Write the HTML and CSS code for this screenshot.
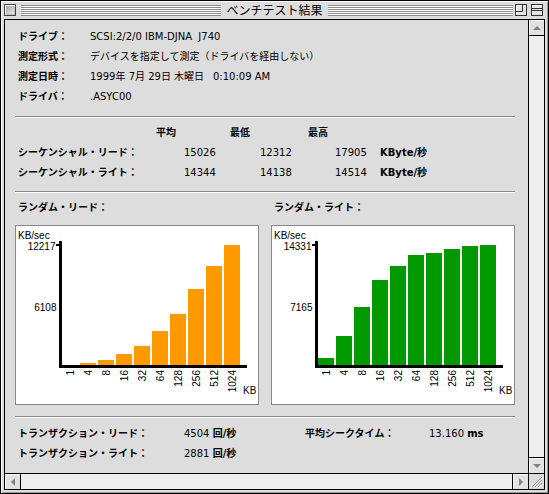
FILE: index.html
```html
<!DOCTYPE html>
<html lang="ja">
<head>
<meta charset="utf-8">
<title>ベンチテスト結果</title>
<link rel="stylesheet" href="styles.css">
</head>
<body>
<div class="window">
  <div class="titlebar">
    <div class="tb-left"><span class="closebox"></span><span class="stripes"></span></div>
    <div class="title">ベンチテスト結果</div>
    <div class="tb-right">
      <span class="stripes"></span>
      <svg class="wbox zoombox" width="12" height="12" viewBox="0 0 12 12">
        <rect x="0.5" y="0.5" width="11" height="11" fill="#e4e4e4" stroke="#333"/>
        <path d="M1.5 10.5V1.5H10.5" fill="none" stroke="#fff"/>
        <path d="M0.5 7.5H7.5V0.5" fill="none" stroke="#333"/>
      </svg>
      <svg class="wbox collapsebox" width="12" height="12" viewBox="0 0 12 12">
        <rect x="0.5" y="0.5" width="11" height="11" fill="#e4e4e4" stroke="#333"/>
        <path d="M1.5 10.5V1.5H10.5" fill="none" stroke="#fff"/>
        <path d="M0.5 4.5H11.5M0.5 6.5H11.5" fill="none" stroke="#333"/>
      </svg>
    </div>
  </div>
  <div class="frame">
    <div class="main">
      <div class="info">
        <div class="lbl">ドライブ：</div><div>SCSI:2/2/0 IBM-DJNA&nbsp; J740</div>
        <div class="lbl">測定形式：</div><div>デバイスを指定して測定（ドライバを経由しない）</div>
        <div class="lbl">測定日時：</div><div><span class="date">1999年 7月 29日 木曜日</span><span>0:10:09 AM</span></div>
        <div class="lbl">ドライバ：</div><div>.ASYC00</div>
      </div>
      <hr class="sep sep1">
      <div class="seq-head"><span></span><span>平均</span><span>最低</span><span>最高</span></div>
      <div class="seq-row"><span class="lbl">シーケンシャル・リード：</span><span>15026</span><span>12312</span><span>17905</span><span class="lbl">KByte/秒</span></div>
      <div class="seq-row"><span class="lbl">シーケンシャル・ライト：</span><span>14344</span><span>14138</span><span>14514</span><span class="lbl">KByte/秒</span></div>
      <hr class="sep sep2">
      <div class="rand-labels"><span>ランダム・リード：</span><span>ランダム・ライト：</span></div>
      <div class="charts">
        <div class="chart">
          <svg width="242" height="178" viewBox="0 0 242 178">
            <text x="2" y="13">KB/sec</text>
            <text x="39.5" y="23.5" text-anchor="end">12217</text>
            <text x="40.5" y="84.5" text-anchor="end">6108</text>
            <g fill="#ff9900">
              <rect x="64" y="137" width="16" height="2"/>
              <rect x="82" y="134" width="16" height="5"/>
              <rect x="100" y="128" width="16" height="11"/>
              <rect x="118" y="120" width="16" height="19"/>
              <rect x="136" y="105" width="16" height="34"/>
              <rect x="154" y="88" width="16" height="51"/>
              <rect x="172" y="63" width="16" height="76"/>
              <rect x="190" y="40" width="16" height="99"/>
              <rect x="208" y="19" width="16" height="120"/>
            </g>
            <rect x="43" y="15" width="3" height="127" fill="#000"/>
            <rect x="43" y="139" width="188" height="3" fill="#000"/>
            <rect x="40" y="18" width="3" height="2" fill="#000"/>
            <g text-anchor="end">
              <text transform="translate(57.5 144) rotate(-90)">1</text>
              <text transform="translate(75.5 144) rotate(-90)">4</text>
              <text transform="translate(93.5 144) rotate(-90)">8</text>
              <text transform="translate(111.5 144) rotate(-90)">16</text>
              <text transform="translate(129.5 144) rotate(-90)">32</text>
              <text transform="translate(147.5 144) rotate(-90)">64</text>
              <text transform="translate(165.5 144) rotate(-90)">128</text>
              <text transform="translate(183.5 144) rotate(-90)">256</text>
              <text transform="translate(201.5 144) rotate(-90)">512</text>
              <text transform="translate(219.5 144) rotate(-90)">1024</text>
            </g>
            <text x="227" y="168">KB</text>
          </svg>
        </div>
        <div class="chart">
          <svg width="242" height="178" viewBox="0 0 242 178">
            <text x="2" y="13">KB/sec</text>
            <text x="39.5" y="23.5" text-anchor="end">14331</text>
            <text x="40.5" y="84.5" text-anchor="end">7165</text>
            <g fill="#009900">
              <rect x="46" y="132" width="16" height="7"/>
              <rect x="64" y="110" width="16" height="29"/>
              <rect x="82" y="81" width="16" height="58"/>
              <rect x="100" y="54" width="16" height="85"/>
              <rect x="118" y="40" width="16" height="99"/>
              <rect x="136" y="29" width="16" height="110"/>
              <rect x="154" y="27" width="16" height="112"/>
              <rect x="172" y="23" width="16" height="116"/>
              <rect x="190" y="20" width="16" height="119"/>
              <rect x="208" y="19" width="16" height="120"/>
            </g>
            <rect x="43" y="15" width="3" height="127" fill="#000"/>
            <rect x="43" y="139" width="188" height="3" fill="#000"/>
            <rect x="40" y="18" width="3" height="2" fill="#000"/>
            <g text-anchor="end">
              <text transform="translate(57.5 144) rotate(-90)">1</text>
              <text transform="translate(75.5 144) rotate(-90)">4</text>
              <text transform="translate(93.5 144) rotate(-90)">8</text>
              <text transform="translate(111.5 144) rotate(-90)">16</text>
              <text transform="translate(129.5 144) rotate(-90)">32</text>
              <text transform="translate(147.5 144) rotate(-90)">64</text>
              <text transform="translate(165.5 144) rotate(-90)">128</text>
              <text transform="translate(183.5 144) rotate(-90)">256</text>
              <text transform="translate(201.5 144) rotate(-90)">512</text>
              <text transform="translate(219.5 144) rotate(-90)">1024</text>
            </g>
            <text x="227" y="168">KB</text>
          </svg>
        </div>
      </div>
      <hr class="sep sep3">
      <div class="trans-row trans1"><span class="lbl">トランザクション・リード：</span><span>4504 <b>回/秒</b></span><span class="lbl">平均シークタイム：</span><span>13.160 <b>ms</b></span></div>
      <div class="trans-row"><span class="lbl">トランザクション・ライト：</span><span>2881 <b>回/秒</b></span></div>
    </div>
    <div class="vscroll">
      <div class="arrow up"><span class="tri tri-up"></span></div>
      <div class="arrow down"><span class="tri tri-down"></span></div>
    </div>
    <div class="hscroll">
      <div class="arrow left"><span class="tri tri-left"></span></div>
      <div class="arrow right"><span class="tri tri-right"></span></div>
    </div>
    <div class="grow">
      <svg width="15" height="15" viewBox="0 0 15 15">
        <g stroke-width="1" fill="none">
          <path d="M3 13L13 3" stroke="#888"/>
          <path d="M4 13L13 4" stroke="#fff"/>
          <path d="M6 13L13 6" stroke="#888"/>
          <path d="M7 13L13 7" stroke="#fff"/>
          <path d="M9 13L13 9" stroke="#888"/>
          <path d="M10 13L13 10" stroke="#fff"/>
        </g>
      </svg>
    </div>
  </div>
</div>
</body>
</html>
```

FILE: styles.css
```css
* {
  box-sizing: border-box;
  margin: 0;
  padding: 0;
}

html, body {
  width: 549px;
  height: 494px;
  overflow: hidden;
}

body {
  font-family: "DejaVu Sans", "Noto Sans CJK JP", sans-serif;
  font-size: 10px;
  color: #000;
  background: #ddd;
}

.window {
  width: 549px;
  height: 494px;
  border: 1px solid #000;
  background: #dddddd;
  box-shadow: inset 1px 1px 0 #fff, inset -1px -1px 0 #999;
  padding: 0 3px 3px;
  display: flex;
  flex-direction: column;
}

/* title bar */
.titlebar {
  height: 18px;
  flex: none;
  display: grid;
  grid-template-columns: 1fr auto 1fr;
  align-items: center;
}

.tb-left, .tb-right {
  display: flex;
  align-items: center;
}

.tb-left {
  gap: 5px;
}

.stripes {
  flex: 1;
  height: 11px;
  background: repeating-linear-gradient(to bottom, #8c8c8c 0 1px, #fff 1px 2px);
}

.closebox {
  width: 12px;
  height: 12px;
  border: 1px solid #444;
  background: linear-gradient(135deg, #9a9a9a 0%, #f4f4f4 100%);
  box-shadow: inset 1px 1px 0 #fff, inset -1px -1px 0 #bbb;
}

.title {
  padding: 0 5px;
  font-family: "Noto Sans CJK JP", sans-serif;
  font-size: 12px;
  line-height: 18px;
  white-space: nowrap;
}

.wbox {
  display: block;
  flex: none;
}

.zoombox {
  margin-left: 2px;
}

.collapsebox {
  margin-left: 4px;
  margin-right: 2px;
}

/* content frame */
.frame {
  flex: 1;
  border: 1px solid #000;
  display: grid;
  grid-template-columns: 1fr 16px;
  grid-template-rows: 1fr 16px;
  background: #dddddd;
  min-height: 0;
}

.main {
  grid-column: 1;
  grid-row: 1;
  padding: 7px 13px 0 10px;
  overflow: hidden;
  white-space: nowrap;
}

.lbl {
  font-weight: bold;
}

.info {
  display: grid;
  grid-template-columns: 72px auto;
  padding-left: 3px;
  line-height: 20px;
}

.date {
  display: inline-block;
  width: 123px;
}

.sep {
  border: 0;
  border-top: 1px solid #888;
  border-bottom: 1px solid #fff;
  height: 2px;
}

.sep1 { margin-top: 9px; }
.sep2 { margin-top: 8px; }
.sep3 { margin-top: 11px; }

.seq-head {
  display: grid;
  grid-template-columns: 138px 74px 78px auto;
  padding-left: 3px;
  line-height: 20px;
  margin-top: 5px;
  font-weight: bold;
}

.seq-row {
  display: grid;
  grid-template-columns: 166px 76px 75px 45px auto;
  padding-left: 3px;
  line-height: 20px;
}

.rand-labels {
  display: grid;
  grid-template-columns: 1fr 1fr;
  column-gap: 12px;
  margin-top: 5px;
  line-height: 20px;
  font-weight: bold;
}

.rand-labels span {
  padding-left: 3px;
}

.charts {
  display: grid;
  grid-template-columns: 1fr 1fr;
  column-gap: 12px;
  margin-top: 7px;
}

.chart {
  height: 180px;
  background: #fff;
  border: 1px solid #888;
}

.chart svg {
  display: block;
}

.chart text {
  font-family: "Liberation Sans", Arial, sans-serif;
  font-size: 10px;
  fill: #000;
}

.trans-row {
  display: grid;
  grid-template-columns: 166px 121px 124px auto;
  padding-left: 3px;
  line-height: 20px;
}

.trans1 {
  margin-top: 6px;
}

/* scroll bars */
.vscroll {
  grid-column: 2;
  grid-row: 1;
  border-left: 1px solid #000;
  background: #eeeeee;
  display: flex;
  flex-direction: column;
  justify-content: space-between;
}

.hscroll {
  grid-column: 1;
  grid-row: 2;
  border-top: 1px solid #000;
  background: #eeeeee;
  display: flex;
  justify-content: space-between;
}

.arrow {
  background: #e2e2e2;
  display: flex;
  align-items: center;
  justify-content: center;
  box-shadow: inset 1px 1px 0 #fff;
}

.arrow.up { height: 16px; border-bottom: 1px solid #000; }
.arrow.down { height: 16px; border-top: 1px solid #000; }
.arrow.left { width: 16px; border-right: 1px solid #000; }
.arrow.right { width: 16px; border-left: 1px solid #000; }

.tri {
  width: 0;
  height: 0;
  border-style: solid;
  border-color: transparent;
}

.tri-up { border-width: 0 4px 4px 4px; border-bottom-color: #808080; }
.tri-down { border-width: 4px 4px 0 4px; border-top-color: #808080; }
.tri-left { border-width: 4px 4px 4px 0; border-right-color: #808080; }
.tri-right { border-width: 4px 0 4px 4px; border-left-color: #808080; }

.grow {
  grid-column: 2;
  grid-row: 2;
  border-left: 1px solid #000;
  border-top: 1px solid #000;
  background: #dddddd;
}

.grow svg {
  display: block;
}
```
